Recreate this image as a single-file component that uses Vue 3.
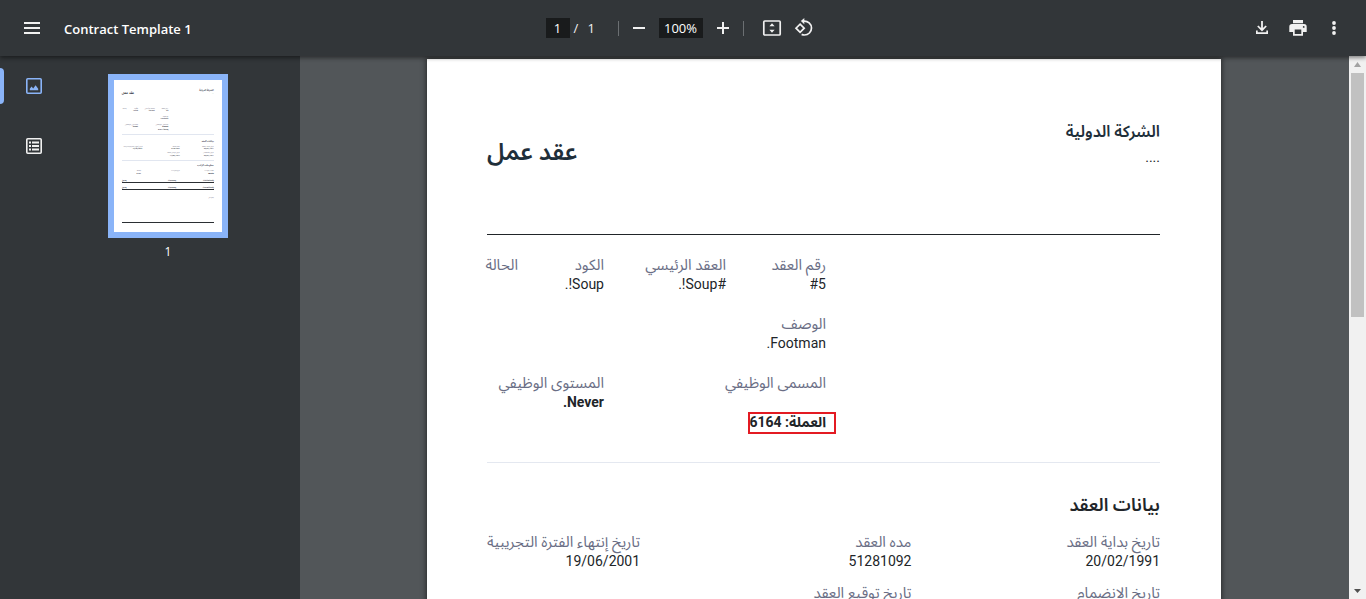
<script setup>
const summary = [
  { label: 'رقم العقد', value: '#5', cls: 'c1' },
  { label: 'العقد الرئيسي', value: '#Soup!.', cls: 'c2' },
  { label: 'الكود', value: 'Soup!.', cls: 'c3' },
  { label: 'الحالة', value: '', cls: 'c4' },
  { label: 'الوصف', value: 'Footman.', cls: 'wide' }
]
const dates = [
  { label: 'تاريخ بداية العقد', value: '20/02/1991' },
  { label: 'مده العقد', value: '51281092' },
  { label: 'تاريخ إنتهاء الفترة التجريبية', value: '19/06/2001' },
  { label: 'تاريخ الانضمام', value: '20/02/1991' },
  { label: 'تاريخ توقيع العقد', value: '17/08/1994' }
]
const thumbTexts = [
  [733, 78, 'الشركة الدولية', 'name'], [733, 102, '....', 'val'], [148, 101, 'عقد عمل', 'title'],
  [399, 212, 'رقم العقد', 'lab'], [399, 231, '#5', 'val'],
  [299, 212, 'العقد الرئيسي', 'lab'], [299, 231, '#Soup!.', 'val'],
  [177, 212, 'الكود', 'lab'], [177, 231, 'Soup!.', 'val'], [91, 212, 'الحالة', 'lab'],
  [399, 271, 'الوصف', 'lab'], [399, 290, 'Footman.', 'val'],
  [399, 330, 'المسمى الوظيفي', 'lab'], [399, 348, 'Europe', 'bold'], [399, 369, 'العملة: 6164', 'bold'],
  [177, 330, 'المستوى الوظيفي', 'lab'], [177, 349, 'Never.', 'bold'],
  [733, 453, 'بيانات العقد', 'name'],
  [733, 489, 'تاريخ بداية العقد', 'lab'], [733, 508, '20/02/1991', 'val'],
  [483, 489, 'مده العقد', 'lab'], [483, 508, '51281092', 'val'],
  [210, 489, 'تاريخ إنتهاء الفترة التجريبية', 'lab'], [210, 508, '19/06/2001', 'val'],
  [733, 540, 'تاريخ الانضمام', 'lab'], [733, 559, '20/02/1991', 'val'],
  [483, 540, 'تاريخ توقيع العقد', 'lab'], [483, 559, '17/08/1994', 'val'],
  [733, 634, 'معلومات الراتب', 'name'],
  [733, 672, 'طلب الراتب', 'lab'], [733, 691, 'Month', 'bold'],
  [483, 672, 'دوره الراتب', 'lab'], [198, 672, 'العملة', 'lab'], [198, 691, '6164', 'bold'],
  [733, 743, 'الاستحقاقات', 'bold'], [456, 743, 'الحسابات', 'bold'], [93, 743, 'المبلغ', 'bold'],
  [733, 795, 'الاستقطاعات', 'bold'], [456, 795, 'الحسابات', 'bold'], [93, 795, 'المبلغ', 'bold'],
  [733, 868, 'التوقيع', 'lab']
]
</script>

<template>
  <div class="app">
    <header class="toolbar">
      <div class="start">
        <button class="icon" aria-label="Menu">
          <svg width="20" height="20" viewBox="0 0 20 20"><path d="M2 4h16v2H2zM2 9h16v2H2zM2 14h16v2H2z" /></svg>
        </button>
        <h1>Contract Template 1</h1>
      </div>
      <div class="center">
        <input class="page-input" aria-label="Page number" value="1">
        <span class="slash">/</span><span class="total">1</span>
        <i class="sep first"></i>
        <button class="icon" aria-label="Zoom out"><svg width="20" height="20" viewBox="0 0 20 20"><path d="M4 9h12v2H4z" /></svg></button>
        <input class="zoom-input" aria-label="Zoom level" value="100%">
        <button class="icon" aria-label="Zoom in"><svg width="20" height="20" viewBox="0 0 20 20"><path d="M4 9h5V4h2v5h5v2h-5v5H9v-5H4z" /></svg></button>
        <i class="sep"></i>
        <button class="icon fit" aria-label="Fit to page">
          <svg width="20" height="20" viewBox="0 0 20 20"><rect x="1.8" y="3" width="16.4" height="14" rx="1" fill="none" stroke="currentColor" stroke-width="1.7" /><path d="M10 5.2 12.6 8.3H7.4zM10 14.8 7.4 11.7h5.2z" /></svg>
        </button>
        <button class="icon" aria-label="Rotate counterclockwise">
          <svg width="20" height="20" viewBox="0 0 20 20"><g fill="none" stroke="currentColor" stroke-width="1.7"><path d="M6.1 6.1 10.2 10.2 6.1 14.3 2 10.2z" /><path d="M9.5 3.1c4.4-.4 8 2.8 8 6.9 0 4-3.2 7-7 7-1 0-2-.2-2.9-.6" /></g><path d="M10.3 0v6.2L6.9 3.1z" /></svg>
        </button>
      </div>
      <div class="end">
        <button class="icon" aria-label="Download"><svg width="20" height="20" viewBox="0 0 20 20"><path d="M9.1 3h1.8v7.1l2.7-2.7 1.2 1.2L10 13.4 5.2 8.6l1.2-1.2 2.7 2.7zM4 12.5h1.7v1.8h8.6v-1.8H16V16H4z" /></svg></button>
        <button class="icon" aria-label="Print"><svg width="20" height="20" viewBox="0 0 20 20"><path fill-rule="evenodd" d="M5 2h10v3.2H5zM4 6h12a2.7 2.7 0 0 1 2.7 2.7V14H15v3.8H5V14H1.3V8.7A2.7 2.7 0 0 1 4 6zm2.7 5.4v4.7h6.6v-4.7zM15.7 8a.9.9 0 1 0 0 1.8.9.9 0 0 0 0-1.8z" /></svg></button>
        <button class="icon" aria-label="More actions"><svg width="20" height="20" viewBox="0 0 20 20"><circle cx="10" cy="5" r="1.9" /><circle cx="10" cy="10" r="1.9" /><circle cx="10" cy="15" r="1.9" /></svg></button>
      </div>
    </header>

    <div class="body">
      <aside class="sidebar">
        <nav class="tabs">
          <button class="tab active" aria-label="Thumbnails">
            <svg width="20" height="20" viewBox="0 0 20 20"><rect x="2.8" y="2.8" width="14.4" height="14.4" rx="1" fill="none" stroke="currentColor" stroke-width="1.6" /><path d="M5.8 14.2v-1.4l1.8-2.2 1.6 1.9 2.4-3.2 2.6 3.4v1.5z" /></svg>
          </button>
          <button class="tab" aria-label="Document outline">
            <svg width="20" height="20" viewBox="0 0 20 20"><rect x="2.8" y="2.8" width="14.4" height="14.4" rx="1" fill="none" stroke="currentColor" stroke-width="1.6" /><path d="M5 5.5h2v2H5zM8 5.5h7v2H8zM5 9h2v2H5zM8 9h7v2H8zM5 12.5h2v2H5zM8 12.5h7v2H8z" /></svg>
          </button>
        </nav>
        <div class="thumbs">
          <button class="thumb" aria-label="Page 1">
            <svg viewBox="0 0 794 1117" direction="rtl">
              <text v-for="(t, i) in thumbTexts" :key="i" :x="t[0]" :y="t[1]" :class="t[3]">{{ t[2] }}</text>
              <path class="pale" d="M60 401h673M60 592h673" />
              <path class="dark" d="M60 753h673M60 805h673M60 1047h673" />
            </svg>
          </button>
          <span class="num">1</span>
        </div>
      </aside>

      <main class="viewer">
        <article class="sheet" dir="rtl" lang="ar">
          <div class="head">
            <div>
              <h3>الشركة الدولية</h3>
              <p>....</p>
            </div>
            <h2>عقد عمل</h2>
          </div>
          <div class="info">
            <dl class="summary">
              <div v-for="f in summary" :key="f.label" :class="f.cls">
                <dt>{{ f.label }}</dt><dd>{{ f.value }}</dd>
              </div>
              <div class="job">
                <dt>المسمى الوظيفي</dt><dd></dd>
                <dd class="strong mark">العملة: 6164</dd>
              </div>
              <div class="c3"><dt>المستوى الوظيفي</dt><dd class="strong">Never.</dd></div>
            </dl>
          </div>
          <section>
            <h4>بيانات العقد</h4>
            <dl class="dates">
              <div v-for="f in dates" :key="f.label"><dt>{{ f.label }}</dt><dd>{{ f.value }}</dd></div>
            </dl>
          </section>
        </article>
      </main>
      <div class="scrollbar" aria-hidden="true">
        <svg width="17" height="17" viewBox="0 0 17 17" class="up"><path d="M8.5 6 12 11H5z" /></svg>
        <div class="track"><div class="grip"></div></div>
        <svg width="17" height="17" viewBox="0 0 17 17" class="down"><path d="M8.5 11 12 7H5z" /></svg>
      </div>
    </div>
  </div>
</template>

<style>
body { margin: 0; overflow: hidden; }
</style>

<style scoped>
* { box-sizing: border-box; }
h1, h2, h3, h4, p, dl, dd { margin: 0; }
button { border: 0; padding: 0; background: none; color: inherit; }
svg { display: block; fill: currentColor; }
.app { display: flex; flex-direction: column; height: 100vh; overflow: hidden; background: #525659; font-family: "Open Sans", "Noto Sans", sans-serif; }
.toolbar { position: relative; z-index: 1; display: grid; grid-template-columns: 1fr auto 1fr; align-items: center; flex: none; height: 56px; background: #323639; color: #f1f1f1; box-shadow: 0 -2px 8px rgba(0, 0, 0, .2), 0 2px 4px rgba(0, 0, 0, .4); font-size: 13px; }
.icon { display: flex; align-items: center; justify-content: center; width: 32px; height: 32px; }
.start { display: flex; align-items: center; gap: 16px; padding-left: 16px; }
h1 { font-size: 13px; line-height: 20px; font-weight: 600; color: #fff; padding-top: 2px; }
.center { display: flex; align-items: center; padding-right: 1px; }
.center input { height: 20px; padding: 0; border: 0; background: #191b1c; color: #fff; text-align: center; font: 13px/20px "Open Sans", sans-serif; }
.page-input { width: 24px; }
.zoom-input { width: 44px; margin: 0 4px; }
.slash { margin-left: 4px; width: 14px; }
.total { width: 6px; }
.sep { width: 1px; height: 15px; background: #6b6f72; margin-right: 12px; margin-left: 4px; }
.sep.first { margin: 0 4px 0 24px; }
.end { display: flex; justify-content: flex-end; gap: 4px; padding-right: 16px; }
.body { flex: 1; display: flex; min-height: 0; }
.sidebar { width: 300px; flex: none; display: flex; background: #323639; color: #f1f1f1; }
.tabs { width: 64px; padding-top: 12px; display: flex; flex-direction: column; gap: 24px; }
.tab { height: 36px; display: flex; align-items: center; gap: 20px; }
.tab::before { content: ""; width: 4px; height: 100%; border-radius: 0 4px 4px 0; }
.tab.active { color: #8ab4f8; }
.tab.active::before { background: #8ab4f8; }
.thumbs { padding: 18px 0 0 44px; display: flex; flex-direction: column; align-items: center; }
.thumb { width: 120px; border: 6px solid #8ab4f8; background: #fff; }
.thumb svg { width: 100%; font-family: Roboto, "Noto Sans Arabic", "Noto Sans", "DejaVu Sans", sans-serif; font-size: 14px; }
.thumb .lab { fill: #5e6278; }
.thumb .val { fill: #181c32; }
.thumb .bold { fill: #181c32; font-weight: 700; }
.thumb .name { fill: #181c32; font-size: 18px; font-weight: 600; }
.thumb .title { fill: #181c32; font-size: 24px; font-weight: 600; }
.thumb path { fill: none; stroke-width: 7; shape-rendering: crispEdges; }
.thumb .pale { stroke: #dfe5ef; }
.thumb .dark { stroke: #212529; }
.num { margin-top: 4px; font-size: 12px; line-height: 20px; color: #fff; }
.viewer { flex: 1; min-width: 0; padding: 3px 1px 0 0; overflow: hidden; }
.sheet { width: 794px; max-width: 100%; min-height: 1123px; margin: 0 auto; padding: 60px 61px 60px 60px; background: #fff; box-shadow: 0 0 5px 1px rgba(0, 0, 0, .5); color: #212529; font: 14px/19px Roboto, "Noto Sans Arabic", "Noto Sans", "DejaVu Sans", sans-serif; }
.head { height: 116px; display: flex; justify-content: space-between; border-bottom: 1px solid #212529; }
h3 { font-size: 16px; line-height: 26px; font-weight: 600; color: #1f2f3a; }
.head p { line-height: 24px; }
h2 { font-size: 24px; line-height: 32px; font-weight: 600; color: #1f2f3a; padding-top: 17px; }
.info { padding: 21px 0 28px; border-bottom: 1px solid #e4e8f0; }
.summary { display: grid; grid-template-columns: 100fr 122fr 86fr 31fr; row-gap: 21px; width: 339px; margin-right: auto; }
.summary > div { white-space: nowrap; min-width: 0; }
.summary > .wide { grid-column: 1 / -1; }
.summary > .job { grid-column: 1 / 3; }
.summary > .c3 { grid-column: 3 / 4; }
dt { color: #6a6e85; font-size: 15px; white-space: nowrap; }
dd { min-height: 19px; }
.strong { font-weight: 700; }
.mark { width: 88px; height: 22px; margin-right: -10px; padding-right: 8px; border: 2px solid #e31b23; line-height: 17px; }
h4 { padding-top: 30px; font-size: 18px; line-height: 24px; font-weight: 600; }
.dates { display: grid; grid-template-columns: 250fr 273fr 150fr; row-gap: 13px; padding-top: 16px; }
.scrollbar { width: 17px; flex: none; display: flex; flex-direction: column; background: #f1f1f1; }
.track { flex: 1; padding: 0 2px; }
.grip { height: 48%; background: #c1c1c1; }
.up { color: #a3a3a3; }
.down { color: #505050; }
</style>
